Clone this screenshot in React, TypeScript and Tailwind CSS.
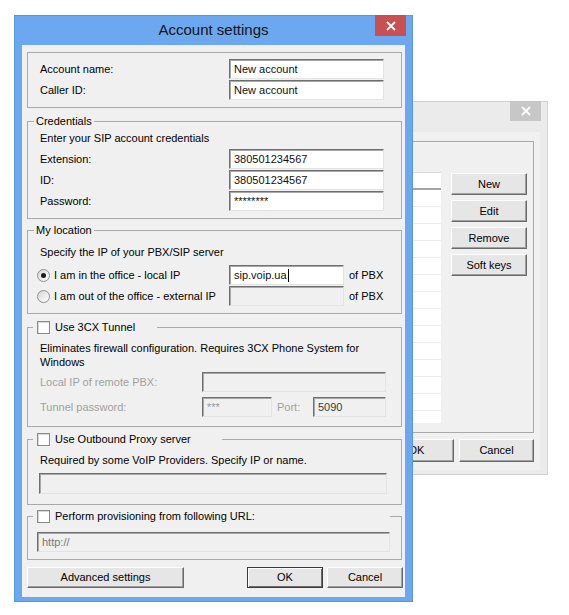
import React from 'react';

const sunken =
  'border border-t-[#6f6f6f] border-l-[#6f6f6f] border-b-[#e3e3e3] border-r-[#e3e3e3] shadow-[inset_1px_1px_0_#a8a8a8]';
const raised =
  'border border-t-[#fdfdfd] border-l-[#fdfdfd] border-b-[#6a6a6a] border-r-[#6a6a6a] shadow-[inset_-1px_-1px_0_#a0a0a0] bg-[#e6e6e6]';

function Input({ value = '', className = '', disabled = false, dim = false, caret = false }: {
  value?: string;
  className?: string;
  disabled?: boolean;
  dim?: boolean;
  caret?: boolean;
}) {
  return (
    <div
      className={`${sunken} ${disabled ? 'bg-[#f0f0f0]' : 'bg-white'} ${dim ? 'text-[#9a9a9a]' : 'text-[#111]'} flex items-center pl-[4px] text-[11px] leading-none ${className}`}
    >
      {value}
      {caret && <span className="ml-[1px] w-[1px] h-[13px] bg-black" />}
    </div>
  );
}

function Radio({ checked }: { checked?: boolean }) {
  return (
    <span className="w-[13px] h-[13px] shrink-0 rounded-full border border-[#8f8f8f] bg-[linear-gradient(135deg,#d6d6d6,#ffffff)] flex items-center justify-center">
      {checked && <span className="w-[5px] h-[5px] rounded-full bg-[#1c1c1c]" />}
    </span>
  );
}

function Check() {
  return <span className="w-[13px] h-[13px] shrink-0 border border-[#8a8a8a] bg-white shadow-[inset_1px_1px_0_#d8d8d8]" />;
}

function Row({ label, value }: { label: string; value: string }) {
  return (
    <div className="flex items-center h-[20px]">
      <span className="w-[189px]">{label}</span>
      <Input value={value} className="w-[155px] h-[20px]" />
    </div>
  );
}

function CloseGlyph() {
  return (
    <svg width="10" height="10" viewBox="0 0 10 10">
      <path d="M1 1 L9 9 M9 1 L1 9" stroke="#fff" strokeWidth="1.8" />
    </svg>
  );
}

function BackWindow() {
  return (
    <div className="absolute left-[280px] top-[101px] w-[268px] h-[374px] bg-[#ebebeb] border border-[#d2d2d2] flex flex-col">
      <div className="relative h-[30px]">
        <div className="absolute -top-[1px] right-[6px] w-[31px] h-[20px] bg-[#c7c7c7] flex items-center justify-center">
          <CloseGlyph />
        </div>
      </div>
      <div className="ml-[8px] mr-[7px] h-[338px] bg-[#f0f0f0] pl-[6px] pr-[6px] pt-[9px]">
        <div className="h-[292px] border border-[#a9a9a9] pl-[5px] pt-[30px] flex">
          <div className="w-[140px] h-[251px] bg-white border-t border-[#dadada] overflow-hidden">
            <div className="h-[17px] border-b-2 border-[#a3a3a3]" />
            {Array.from({ length: 14 }).map((_, i) => (
              <div key={i} className="h-[17px] border-b border-[#ececec]" />
            ))}
          </div>
          <div className="ml-[10px] mt-[1px] flex flex-col gap-[5px]">
            {['New', 'Edit', 'Remove', 'Soft keys'].map((b) => (
              <div key={b} className={`${raised} w-[76px] h-[22px] flex items-center justify-center`}>
                {b}
              </div>
            ))}
          </div>
        </div>
        <div className="mt-[6px] flex justify-end gap-[5px]">
          <div className={`${raised} w-[75px] h-[23px] flex items-center justify-center`}>OK</div>
          <div className={`${raised} w-[75px] h-[23px] flex items-center justify-center`}>Cancel</div>
        </div>
      </div>
    </div>
  );
}

export default function App() {
  return (
    <div className="relative w-[569px] h-[615px] bg-white overflow-hidden font-['Liberation_Sans',Arial,sans-serif] text-[11px] text-black">
      <BackWindow />

      <div className="absolute left-[14px] top-[15px] w-[399px] h-[587px] bg-[#6ba8ef] border border-[#5a96df] flex flex-col">
        <div className="relative h-[29px] flex items-center justify-center text-[15px] text-[#141414]">
          Account settings
          <div className="absolute -top-[1px] right-[6px] w-[31px] h-[21px] bg-[#c75050] flex items-center justify-center">
            <CloseGlyph />
          </div>
        </div>

        <div className="mx-[7px] h-[552px] bg-[#f0f0f0] pl-[5px] pt-[7px] flex flex-col">
          <fieldset className="w-[375px] h-[56px] border border-[#a9a9a9]">
            <div className="pl-[12px] pt-[6px] flex flex-col gap-[1px]">
              <Row label="Account name:" value="New account" />
              <Row label="Caller ID:" value="New account" />
            </div>
          </fieldset>

          <fieldset className="mt-[7px] w-[375px] h-[104px] border border-[#a9a9a9]">
            <legend className="ml-[6px] px-[2px] h-[13px] leading-[13px]">Credentials</legend>
            <div className="pl-[12px] pt-[3px]">
              <div className="leading-[14px]">Enter your SIP account credentials</div>
              <div className="mt-[4px] flex flex-col gap-[1px]">
                <Row label="Extension:" value="380501234567" />
                <Row label="ID:" value="380501234567" />
                <Row label="Password:" value="********" />
              </div>
            </div>
          </fieldset>

          <fieldset className="mt-[5px] w-[375px] h-[90px] border border-[#a9a9a9]">
            <legend className="ml-[6px] px-[2px] h-[13px] leading-[13px]">My location</legend>
            <div className="pl-[9px] pt-[8px]">
              <div className="pl-[3px] leading-[14px]">Specify the IP of your PBX/SIP server</div>
              <div className="mt-[6px] flex flex-col gap-[1px]">
                <div className="flex items-center h-[20px]">
                  <div className="w-[192px] flex items-center gap-[4px]">
                    <Radio checked />
                    <span>I am in the office - local IP</span>
                  </div>
                  <Input value="sip.voip.ua" caret className="w-[115px] h-[20px]" />
                  <span className="ml-[5px]">of PBX</span>
                </div>
                <div className="flex items-center h-[20px]">
                  <div className="w-[192px] flex items-center gap-[4px]">
                    <Radio />
                    <span>I am out of the office - external IP</span>
                  </div>
                  <Input disabled className="w-[115px] h-[20px]" />
                  <span className="ml-[5px]">of PBX</span>
                </div>
              </div>
            </div>
          </fieldset>

          <fieldset className="mt-[7px] w-[375px] h-[106px] border border-[#a9a9a9]">
            <legend className="ml-[5px] pl-[4px] w-[124px] h-[13px] flex items-center gap-[5px]">
              <Check />
              <span>Use 3CX Tunnel</span>
            </legend>
            <div className="pl-[12px] pt-[7px]">
              <div className="leading-[14px]">
                Eliminates firewall configuration. Requires 3CX Phone System for
                <br />
                Windows
              </div>
              <div className="mt-[3px] flex items-center h-[20px] text-[#a0a0a0]">
                <span className="w-[162px]">Local IP of remote PBX:</span>
                <Input disabled className="w-[184px] h-[20px]" />
              </div>
              <div className="mt-[5px] flex items-center h-[20px] text-[#a0a0a0]">
                <span className="w-[162px]">Tunnel password:</span>
                <Input disabled dim value="***" className="w-[70px] h-[20px]" />
                <span className="ml-[5px] w-[36px]">Port:</span>
                <Input disabled value="5090" className="w-[73px] h-[20px] !text-[#3c3c3c]" />
              </div>
            </div>
          </fieldset>

          <fieldset className="mt-[6px] w-[375px] h-[72px] border border-[#a9a9a9]">
            <legend className="ml-[5px] pl-[4px] w-[189px] h-[13px] flex items-center gap-[5px]">
              <Check />
              <span>Use Outbound Proxy server</span>
            </legend>
            <div className="pl-[11px] pt-[7px]">
              <div className="pl-[1px] leading-[14px]">Required by some VoIP Providers. Specify IP or name.</div>
              <Input disabled className="mt-[6px] w-[348px] h-[21px]" />
            </div>
          </fieldset>

          <fieldset className="mt-[5px] w-[375px] h-[50px] border border-[#a9a9a9]">
            <legend className="ml-[5px] pl-[4px] w-[357px] h-[13px] flex items-center gap-[5px]">
              <Check />
              <span>Perform provisioning from following URL:</span>
            </legend>
            <div className="pl-[9px] pt-[9px]">
              <Input disabled value="http://" className="w-[353px] h-[20px] !text-[#777]" />
            </div>
          </fieldset>

          <div className="mt-[7px] w-[376px] flex">
            <div className={`${raised} w-[157px] h-[21px] flex items-center justify-center`}>Advanced settings</div>
            <div className="ml-auto w-[76px] h-[21px] border border-[#3a3a3a] bg-[#e6e6e6] shadow-[inset_1px_1px_0_#fdfdfd,inset_-1px_-1px_0_#6a6a6a] flex items-center justify-center">
              OK
            </div>
            <div className={`${raised} ml-[4px] w-[76px] h-[21px] flex items-center justify-center`}>Cancel</div>
          </div>
        </div>
      </div>
    </div>
  );
}
